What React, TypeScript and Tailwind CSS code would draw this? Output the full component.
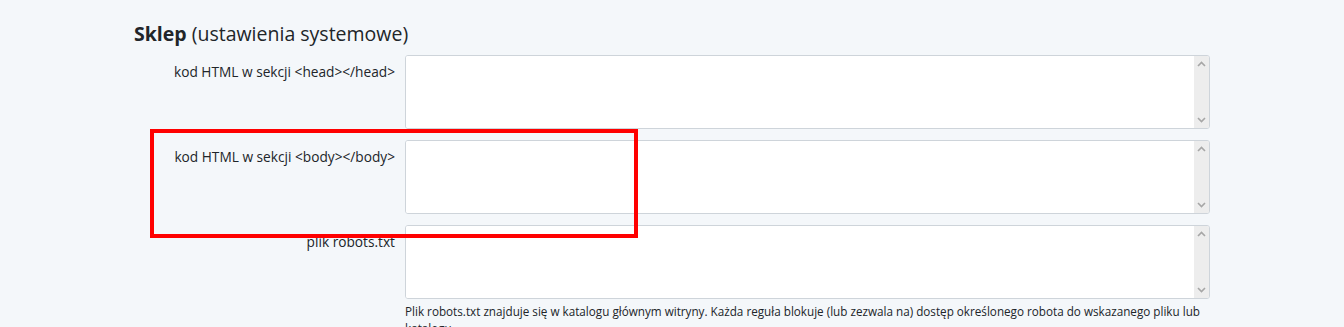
const rows = [
  { label: "kod HTML w sekcji <head></head>" },
  { label: "kod HTML w sekcji <body></body>" },
  {
    label: "plik robots.txt",
    help: "Plik robots.txt znajduje się w katalogu głównym witryny. Każda reguła blokuje (lub zezwala na) dostęp określonego robota do wskazanego pliku lub katalogu.",
  },
];

function Chevron({ down }: { down?: boolean }) {
  return (
    <svg width="9" height="6" viewBox="0 0 9 6" className="block">
      <path
        d={down ? "M1 1 L4.5 4.5 L8 1" : "M1 5 L4.5 1.5 L8 5"}
        fill="none"
        stroke="#a6a6a6"
        strokeWidth="1.6"
      />
    </svg>
  );
}

export default function App() {
  return (
    <div
      className="relative min-h-[327px] w-full overflow-hidden bg-[#f4f7fa] text-[#212529]"
      style={{ fontFamily: '"Open Sans", "Liberation Sans", sans-serif' }}
    >
      <div className="mx-auto w-[1076px] pt-[21px]">
        <h2 className="mb-[8px] text-[19.5px] leading-[26px] text-[#212529]">
          <span className="font-bold">Sklep</span> (ustawienia systemowe)
        </h2>

        <div className="flex flex-col gap-[11px]">
          {rows.map((row) => (
            <div key={row.label} className="flex gap-[10px]">
              <label className="w-[261px] shrink-0 pt-[8px] text-right text-[13.7px] leading-[18px]">
                {row.label}
              </label>
              <div className="flex-1">
                <div className="flex h-[74px] overflow-hidden rounded-[3px] border border-[#ced4da] bg-white">
                  <textarea className="block h-full flex-1 resize-none overflow-hidden bg-white px-2 py-1 text-[13px] outline-none" />
                  <div className="flex w-[15px] flex-col items-center justify-between bg-[#ededed] py-[5px]">
                    <Chevron />
                    <Chevron down />
                  </div>
                </div>
                {row.help ? (
                  <p className="mt-[4px] -mr-[4px] text-[11.7px] leading-[17px] text-[#212529]">
                    {row.help}
                  </p>
                ) : null}
              </div>
            </div>
          ))}
        </div>
      </div>

      {/* zaznaczenie */}
      <div className="pointer-events-none absolute left-[150px] top-[129px] h-[109px] w-[488px] border-4 border-[#ff0000]" />
    </div>
  );
}
